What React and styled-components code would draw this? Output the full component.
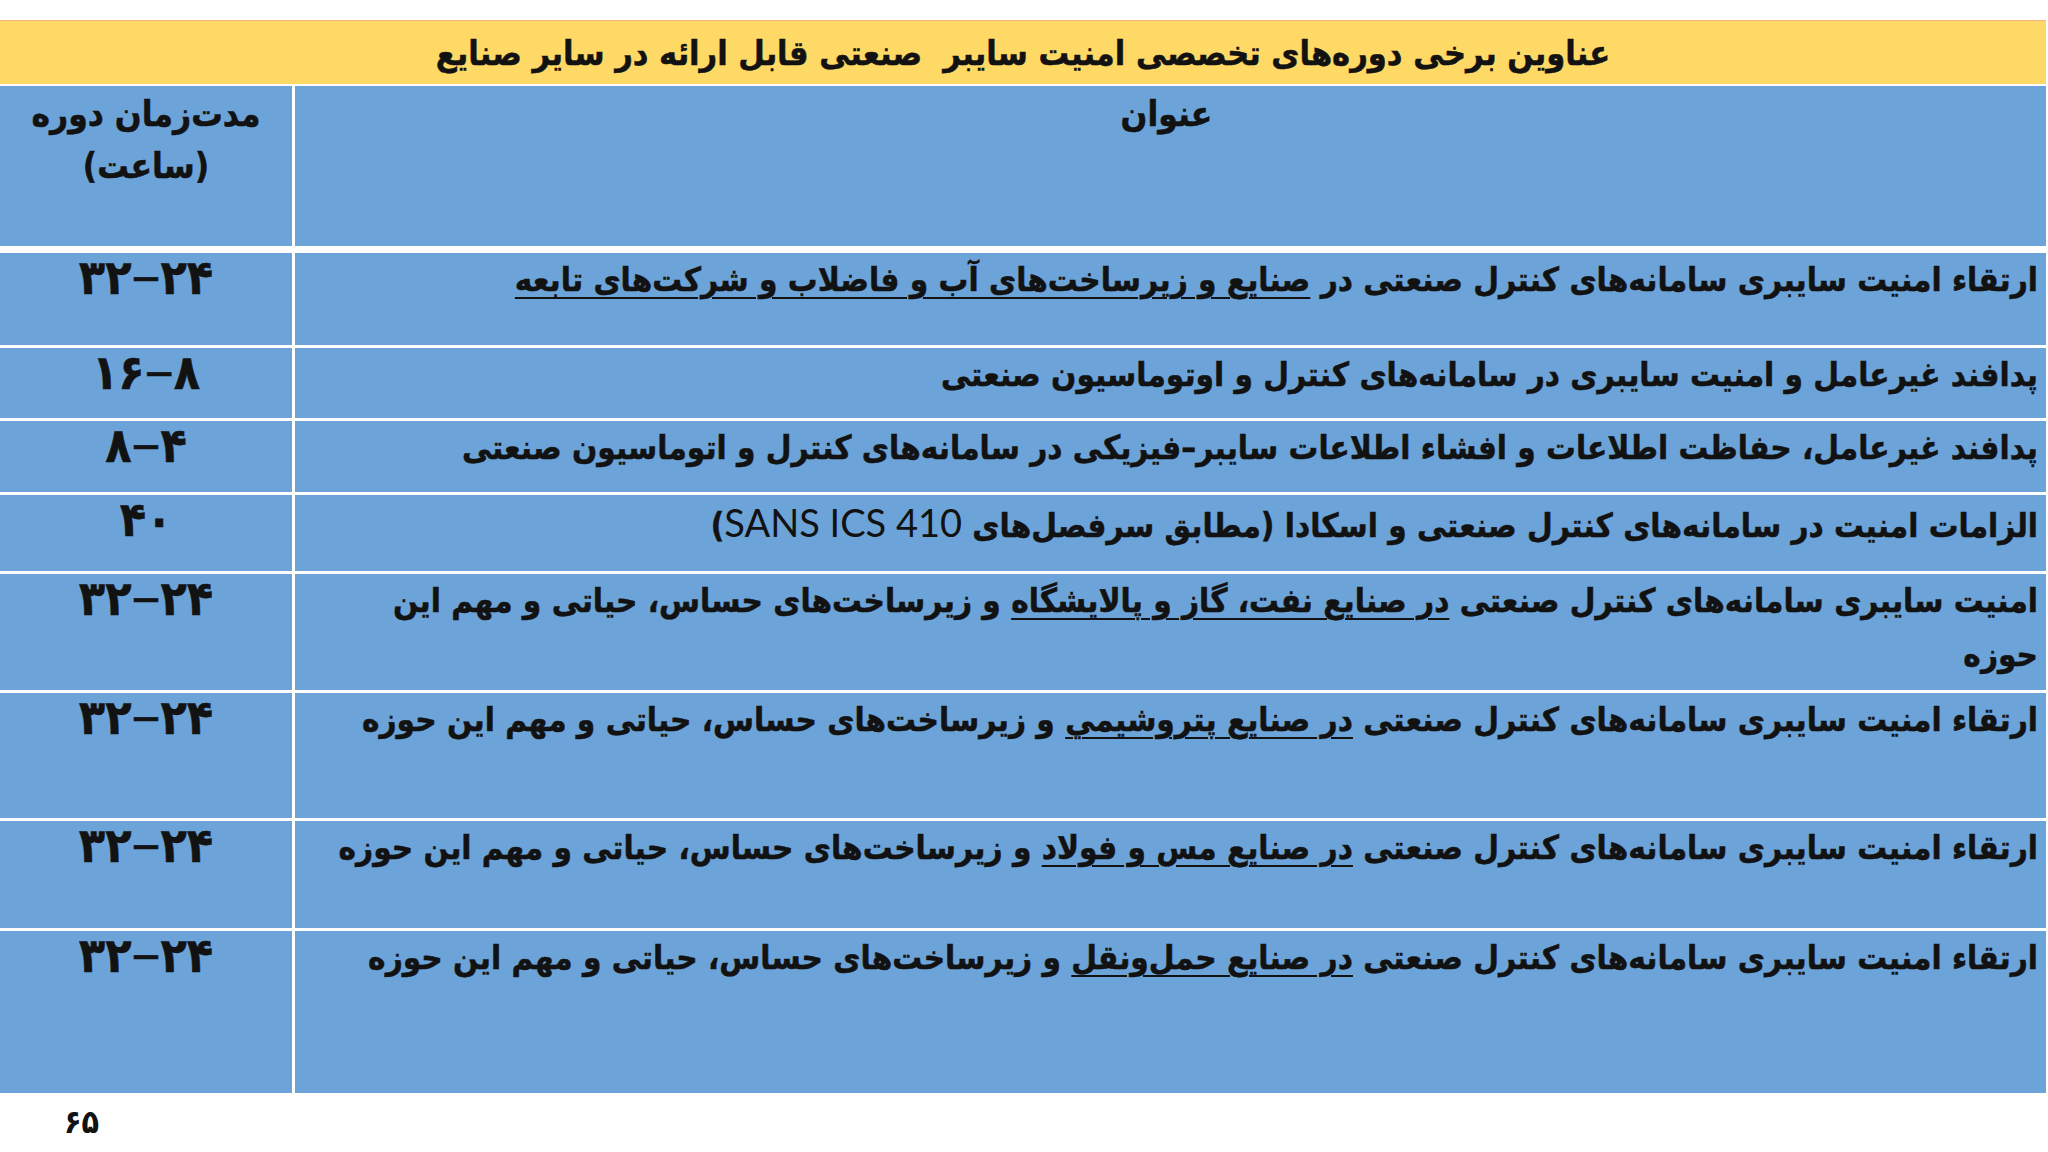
import React from "react";
import styled, { createGlobalStyle } from "styled-components";

const GlobalStyle = createGlobalStyle`
  html, body {
    margin: 0;
    padding: 0;
    background: #ffffff;
  }
  body {
    width: 2048px;
    height: 1152px;
    overflow: hidden;
    font-family: "DejaVu Sans Condensed", "DejaVu Sans", sans-serif;
    color: #121212;
  }
`;

const Page = styled.div`
  width: 2048px;
  height: 1152px;
  padding-top: 20px;
  box-sizing: border-box;
  display: flex;
  flex-direction: column;
`;

const Table = styled.div`
  width: 2046px;
  display: flex;
  flex-direction: column;
`;

const TitleBar = styled.div`
  height: 63px;
  border-top: 1px solid #f4b183;
  background: #ffd966;
  display: flex;
  align-items: center;
  justify-content: center;
  direction: rtl;
  font-weight: bold;
  font-size: 34px;
  -webkit-text-stroke: 0.5px #121212;
  white-space: pre;
`;

const Row = styled.div`
  display: grid;
  grid-template-columns: 292px minmax(0, 1fr);
  column-gap: 3px;
  height: ${(p) => p.$h}px;
  margin-top: ${(p) => p.$gap}px;
`;

const Cell = styled.div`
  background: #6ca4d9;
  direction: rtl;
  font-weight: bold;
  box-sizing: border-box;
  min-width: 0;
  -webkit-text-stroke: 0.5px #121212;
`;

const HoursCell = styled(Cell)`
  text-align: center;
  font-size: ${(p) => (p.$head ? 35 : 48)}px;
  line-height: ${(p) => (p.$head ? 52 : 48)}px;
  padding-top: ${(p) => (p.$head ? 2 : 0)}px;
`;

const Dash = styled.span`
  display: inline-block;
  font-size: 30px;
  line-height: 30px;
  vertical-align: 7px;
  margin: 0 1px;
`;

const TitleCell = styled(Cell)`
  text-align: ${(p) => (p.$center ? "center" : "right")};
  font-size: ${(p) => (p.$center ? 35 : 33)}px;
  line-height: ${(p) => (p.$center ? 52 : 54)}px;
  padding: ${(p) => (p.$center ? 2 : 0)}px 8px 0 0;
  white-space: nowrap;
  overflow: hidden;
`;

const Under = styled.span`
  text-decoration: underline;
  text-decoration-thickness: 2px;
  text-underline-offset: 6px;
`;

const Latin = styled.span`
  font-family: "Lato", "Liberation Sans", sans-serif;
  font-weight: normal;
  font-size: 38px;
  -webkit-text-stroke: 0;
`;

const PageNumber = styled.div`
  margin: 10px 0 0 64px;
  font-size: 32px;
  font-weight: bold;
  direction: rtl;
  width: 42px;
  text-align: left;
`;

const rows = [
  {
    h: 92,
    hours: ["۲۴", "۳۲"],
    text: (
      <>
        ارتقاء امنیت سایبری سامانه‌های کنترل صنعتی در{" "}
        <Under>صنایع و زیرساخت‌های آب و فاضلاب و شرکت‌های تابعه</Under>
      </>
    ),
  },
  {
    h: 70,
    hours: ["۸", "۱۶"],
    text: <>پدافند غیرعامل و امنیت سایبری در سامانه‌های کنترل و اوتوماسیون صنعتی</>,
  },
  {
    h: 71,
    hours: ["۴", "۸"],
    text: (
      <>
        پدافند غیرعامل، حفاظت اطلاعات و افشاء اطلاعات سایبر–فیزیکی در سامانه‌های کنترل و اتوماسیون صنعتی
      </>
    ),
  },
  {
    h: 76,
    hours: ["۴۰"],
    text: (
      <>
        الزامات امنیت در سامانه‌های کنترل صنعتی و اسکادا (مطابق سرفصل‌های <Latin>SANS ICS 410</Latin>)
      </>
    ),
  },
  {
    h: 116,
    hours: ["۲۴", "۳۲"],
    text: (
      <>
        امنیت سایبری سامانه‌های کنترل صنعتی <Under>در صنایع نفت، گاز و پالایشگاه</Under> و زیرساخت‌های حساس، حیاتی و مهم این
        <br />
        حوزه
      </>
    ),
  },
  {
    h: 125,
    hours: ["۲۴", "۳۲"],
    text: (
      <>
        ارتقاء امنیت سایبری سامانه‌های کنترل صنعتی <Under>در صنایع پتروشیمي</Under> و زیرساخت‌های حساس، حیاتی و مهم این حوزه
      </>
    ),
  },
  {
    h: 107,
    hours: ["۲۴", "۳۲"],
    text: (
      <>
        ارتقاء امنیت سایبری سامانه‌های کنترل صنعتی <Under>در صنایع مس و فولاد</Under> و زیرساخت‌های حساس، حیاتی و مهم این حوزه
      </>
    ),
  },
  {
    h: 162,
    hours: ["۲۴", "۳۲"],
    text: (
      <>
        ارتقاء امنیت سایبری سامانه‌های کنترل صنعتی <Under>در صنایع حمل‌ونقل</Under> و زیرساخت‌های حساس، حیاتی و مهم این حوزه
      </>
    ),
  },
];

function Hours({ range }) {
  const [from, to] = range;
  return (
    <HoursCell>
      {from}
      {to && (
        <>
          <Dash>—</Dash>
          {to}
        </>
      )}
    </HoursCell>
  );
}

export default function App() {
  return (
    <>
      <GlobalStyle />
      <Page>
        <Table>
          <TitleBar>عناوین برخی دوره‌های تخصصی امنیت سایبر  صنعتی قابل ارائه در سایر صنایع</TitleBar>
          <Row $h={160} $gap={2}>
            <HoursCell $head>
              مدت‌زمان دوره
              <br />
              (ساعت)
            </HoursCell>
            <TitleCell $center>عنوان</TitleCell>
          </Row>
          {rows.map((r, i) => (
            <Row key={i} $h={r.h} $gap={i === 0 ? 7 : 3}>
              <Hours range={r.hours} />
              <TitleCell>{r.text}</TitleCell>
            </Row>
          ))}
        </Table>
        <PageNumber>۶۵</PageNumber>
      </Page>
    </>
  );
}
